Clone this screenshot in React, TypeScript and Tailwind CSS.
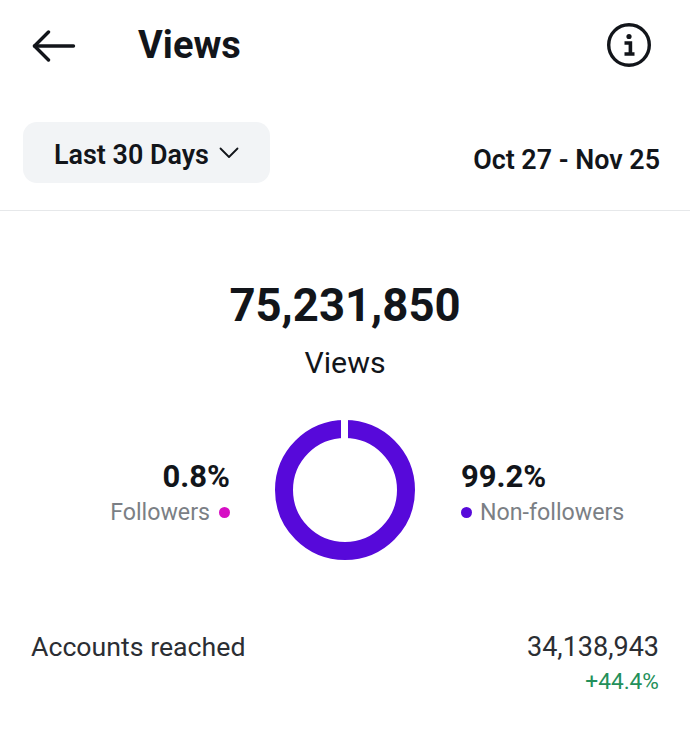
const font = "font-['Roboto',sans-serif]";

function BackArrow() {
	return (
		<svg width="44" height="32" viewBox="0 0 44 32" fill="none" stroke="#12151a" strokeWidth="3.4" strokeLinecap="round" strokeLinejoin="round">
			<path d="M2.5 16H41.5" />
			<path d="M16.5 2L2.5 16L16.5 30" />
		</svg>
	);
}

function InfoIcon() {
	return (
		<svg width="44" height="44" viewBox="0 0 44 44" fill="none">
			<circle cx="22" cy="22" r="20.3" stroke="#12151a" strokeWidth="3.4" />
			<circle cx="22" cy="13.5" r="2.6" fill="#12151a" />
			<path d="M17.5 20H23.4V30M17.5 31H27.5" stroke="#12151a" strokeWidth="3.6" />
		</svg>
	);
}

function Donut() {
	return (
		<svg width="140" height="140" viewBox="0 0 140 140" className="shrink-0">
			<circle cx="70" cy="70" r="61" fill="none" stroke="#5709da" strokeWidth="18" />
			<rect x="66" y="0" width="7" height="20" fill="#ffffff" />
		</svg>
	);
}

export default function App() {
	return (
		<div className={`${font} w-[690px] h-[752px] bg-white text-[#12151a] overflow-hidden`}>
			{/* Header */}
			<header className="flex items-center h-[90px] pl-[32px] pr-[39px]">
				<div className="pt-[2px]">
					<BackArrow />
				</div>
				<h1 className="ml-[62px] text-[38px] font-bold leading-none">Views</h1>
				<div className="ml-auto">
					<InfoIcon />
				</div>
			</header>

			{/* Range row */}
			<div className="flex items-end justify-between h-[121px] pl-[23px] pr-[30px] pb-[27px] border-b border-[#e6e8ea]">
				<button className="flex items-center gap-[10px] h-[61px] w-[247px] pl-[31px] pt-[5px] rounded-[14px] bg-[#f2f4f6]">
					<span className="text-[26.9px] font-semibold leading-none">Last 30 Days</span>
					<svg width="20" height="12" viewBox="0 0 20 12" fill="none" stroke="#12151a" strokeWidth="1.8" strokeLinecap="round" strokeLinejoin="round" className="-mt-[5px]">
						<path d="M1.5 1.5L10 10L18.5 1.5" />
					</svg>
				</button>
				<span className="text-[26.85px] font-semibold leading-none pb-[9px]">Oct 27 - Nov 25</span>
			</div>

			{/* Total */}
			<section className="flex flex-col items-center pt-[72px]">
				<div className="text-[45.5px] font-bold leading-[46px]">75,231,850</div>
				<div className="mt-[19px] text-[30.3px] leading-[30px]">Views</div>
			</section>

			{/* Split */}
			<section className="relative flex items-center justify-center mt-[42px]">
				<div className="flex flex-col items-end absolute right-[460px] top-[41px]">
					<div className="text-[31px] font-bold leading-[31px] whitespace-nowrap">0.8%</div>
					<div className="flex items-center gap-[9px] mt-[9px] whitespace-nowrap">
						<span className="text-[23.2px] leading-[23px] text-[#7b7f85]">Followers</span>
						<span className="w-[11px] h-[11px] rounded-full bg-[#d60fc4]" />
					</div>
				</div>
				<Donut />
				<div className="flex flex-col items-start absolute left-[461px] top-[41px]">
					<div className="text-[31px] font-bold leading-[31px] whitespace-nowrap">99.2%</div>
					<div className="flex items-center gap-[8px] mt-[9px] whitespace-nowrap">
						<span className="w-[11px] h-[11px] rounded-full bg-[#5709da]" />
						<span className="text-[23.2px] leading-[23px] text-[#7b7f85]">Non-followers</span>
					</div>
				</div>
			</section>

			{/* Accounts reached */}
			<section className="flex justify-between px-[31px] mt-[74px]">
				<span className="text-[26.7px] leading-[27px] text-[#2b2e33]">Accounts reached</span>
				<div className="flex flex-col items-end">
					<span className="text-[27px] leading-[27px] text-[#2b2e33]">34,138,943</span>
					<span className="mt-[9px] text-[22.7px] leading-[23px] text-[#23905a]">+44.4%</span>
				</div>
			</section>
		</div>
	);
}
